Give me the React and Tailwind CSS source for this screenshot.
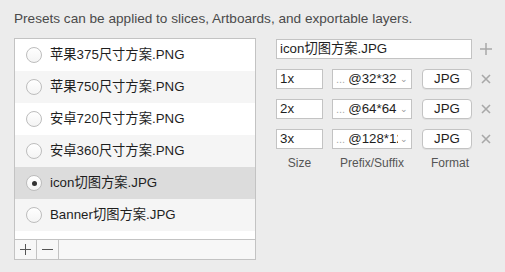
import React, { useState } from "react";

const presets = [
  "苹果375尺寸方案.PNG",
  "苹果750尺寸方案.PNG",
  "安卓720尺寸方案.PNG",
  "安卓360尺寸方案.PNG",
  "icon切图方案.JPG",
  "Banner切图方案.JPG",
];

const sizes = [
  { size: "1x", suffix: "@32*32" },
  { size: "2x", suffix: "@64*64" },
  { size: "3x", suffix: "@128*128" },
];

const Radio = ({ checked }) => (
  <div className="w-[16px] h-[16px] rounded-full border border-[#bdbdbd] bg-gradient-to-b from-white to-[#f4f4f4] flex items-center justify-center shrink-0">
    {checked && <div className="w-[5px] h-[5px] rounded-full bg-[#333]"></div>}
  </div>
);

const App = () => {
  const [selected, setSelected] = useState(4);

  return (
    <div
      className="w-[505px] h-[272px] overflow-hidden bg-[#ececec] pl-[14px] pt-[11px] text-[13px] text-[#1e1e1e]"
      style={{ fontFamily: '"Liberation Sans", "Noto Sans CJK SC", sans-serif' }}
    >
      <div className="h-[16px] leading-[16px] text-[13.6px] text-[#4a4a4a] whitespace-nowrap">
        Presets can be applied to slices, Artboards, and exportable layers.
      </div>

      <div className="mt-[11px] flex gap-[20px]">
        <div className="w-[242px] shrink-0 h-[222px] border border-[#c3c3c3] bg-white flex flex-col">
          <div className="flex-1">
            {presets.map((name, i) => (
              <div
                key={name}
                onClick={() => setSelected(i)}
                className={
                  "h-[32px] flex items-center pl-[11px] gap-[8px] " +
                  (i === selected ? "bg-[#dcdcdc]" : i % 2 === 1 ? "bg-[#f5f5f5]" : "bg-white")
                }
              >
                <Radio checked={i === selected} />
                <span className="leading-none text-[13.3px]">{name}</span>
              </div>
            ))}
          </div>
          <div className="h-[20px] border-t border-[#c3c3c3] bg-[#f7f7f7] flex text-[#555]">
            <button className="w-[22px] border-r border-[#c3c3c3] flex items-center justify-center">
              <svg width="11" height="11" viewBox="0 0 11 11">
                <path d="M5.5 0v11M0 5.5h11" stroke="#555" strokeWidth="1" />
              </svg>
            </button>
            <button className="w-[22px] border-r border-[#c3c3c3] flex items-center justify-center">
              <svg width="11" height="11" viewBox="0 0 11 11">
                <path d="M0 5.5h11" stroke="#555" strokeWidth="1" />
              </svg>
            </button>
          </div>
        </div>

        <div className="pt-[1px] shrink-0">
          <div className="flex items-center">
            <div className="w-[196px] h-[20px] border border-[#c3c3c3] bg-white flex items-center px-[3px] leading-none text-[13.3px]">
              icon切图方案.JPG
            </div>
            <div className="w-[28px] flex justify-center">
              <svg width="12" height="12" viewBox="0 0 12 12">
                <path d="M6 0v12M0 6h12" stroke="#a8a8a8" strokeWidth="1.5" />
              </svg>
            </div>
          </div>

          <div className="mt-[10px] flex flex-col gap-[10px]">
            {sizes.map((row) => (
              <div key={row.size} className="flex items-center">
                <div className="w-[47px] h-[20px] border border-[#c3c3c3] bg-white flex items-center px-[3px] leading-none text-[13.3px]">
                  {row.size}
                </div>
                <div className="ml-[9px] w-[80px] h-[20px] border border-[#c3c3c3] bg-white flex items-center pl-[3px] pr-[3px] leading-none overflow-hidden">
                  <span className="text-[#aaa] text-[11px] mr-[3px]">...</span>
                  <span className="flex-1 overflow-hidden whitespace-nowrap text-[13.3px]">{row.suffix}</span>
                  <span className="text-[#999] text-[9px] ml-[2px]">⌄</span>
                </div>
                <button className="ml-[10px] w-[50px] h-[20px] rounded-[4px] border border-[#c3c3c3] bg-white flex items-center justify-center leading-none text-[13.3px] shadow-[0_1px_0_rgba(0,0,0,0.05)]">
                  JPG
                </button>
                <div className="w-[28px] flex justify-center">
                  <svg width="10" height="10" viewBox="0 0 10 10">
                    <path d="M1 1l8 8M9 1l-8 8" stroke="#a8a8a8" strokeWidth="1.6" />
                  </svg>
                </div>
              </div>
            ))}
          </div>

          <div className="mt-[6px] flex text-[12px] text-[#555] leading-[16px]">
            <div className="w-[47px] text-center">Size</div>
            <div className="ml-[9px] w-[80px] text-center">Prefix/Suffix</div>
            <div className="ml-[10px] w-[50px] text-center pl-[6px]">Format</div>
          </div>
        </div>
      </div>
    </div>
  );
};

export default App;
